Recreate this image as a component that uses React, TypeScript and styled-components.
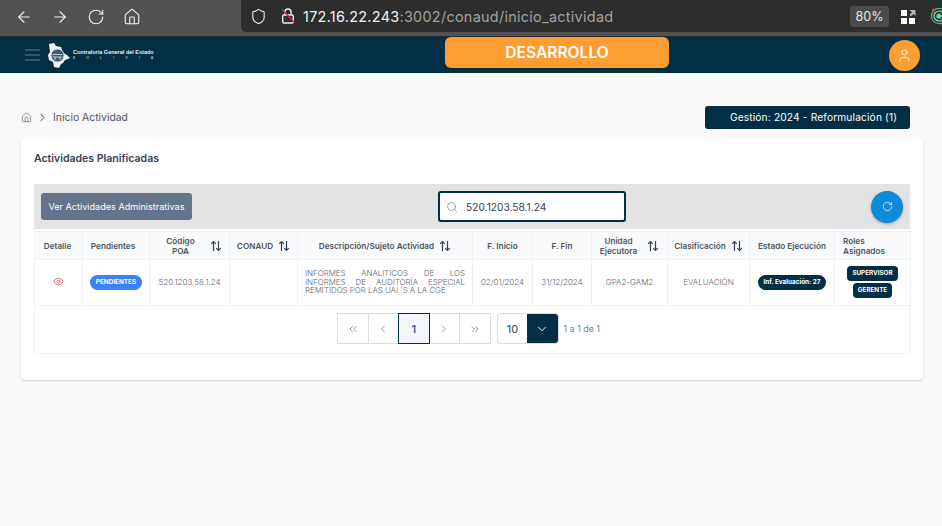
import React from 'react';
import styled, { createGlobalStyle } from 'styled-components';
import {
  ArrowLeft,
  ArrowRight,
  RotateCw,
  Home,
  Shield,
  Search,
  User,
  Eye,
  ChevronLeft,
  ChevronRight,
  ChevronsLeft,
  ChevronsRight,
  ChevronDown,
} from 'lucide-react';

const GlobalStyle = createGlobalStyle`
  html, body {
    margin: 0;
    padding: 0;
    height: 100%;
    overflow: hidden;
    background: #f9f9f9;
    font-family: Inter, "Liberation Sans", sans-serif;
  }
  * { box-sizing: border-box; }
`;

const Page = styled.div`
  width: 942px;
  height: 526px;
  overflow: hidden;
  display: flex;
  flex-direction: column;
`;

/* browser chrome */
const BrowserBar = styled.div`
  height: 37px;
  background: #525252;
  display: flex;
  align-items: flex-start;
  border-bottom: 1px solid #2a2a2a;
`;

const NavButtons = styled.div`
  width: 241px;
  height: 33px;
  display: flex;
  align-items: center;
  gap: 18px;
  padding-left: 15px;
  color: #f2f2f2;
  flex-shrink: 0;
`;

const UrlBar = styled.div`
  flex: 1;
  height: 32px;
  background: #2d2d2d;
  border-radius: 0 0 0 5px;
  display: flex;
  align-items: center;
  padding: 0 0 0 9px;
  color: #f0f0f0;
`;

const LockGap = styled.div`
  width: 13px;
`;

const UrlText = styled.div`
  margin-left: 7px;
  font-size: 14.4px;
  letter-spacing: 0.3px;
  color: #f4f4f4;
  flex: 1;
  white-space: nowrap;
  span { color: #a2a2a2; }
`;

const Zoom = styled.div`
  width: 39px;
  height: 21px;
  border-radius: 3px;
  background: #4a4a4a;
  color: #e6e6e6;
  font-size: 12.5px;
  display: flex;
  align-items: center;
  justify-content: center;
  margin-right: 12px;
`;

const AddonWrap = styled.div`
  width: 41px;
  display: flex;
  align-items: center;
  gap: 14px;
  flex-shrink: 0;
`;

/* app navbar */
const NavBar = styled.div`
  height: 36px;
  background: #022f46;
  display: flex;
  align-items: center;
  padding: 0 22px 0 25px;
`;

const Burger = styled.div`
  width: 15px;
  display: flex;
  flex-direction: column;
  gap: 3px;
  margin-right: 7px;
  i {
    display: block;
    height: 2px;
    background: #33556a;
  }
`;

const Brand = styled.div`
  display: flex;
  align-items: center;
  gap: 2px;
  width: 106px;
`;

const BrandText = styled.div`
  color: #e8eef2;
  font-family: "Liberation Sans", sans-serif;
  display: flex;
  flex-direction: column;
  width: 80px;
  line-height: 1;
  b {
    font-size: 5.5px;
    white-space: nowrap;
  }
  small {
    font-size: 3px;
    margin-top: 2px;
    display: flex;
    justify-content: space-between;
  }
`;

const EnvBadge = styled.div`
  width: 224px;
  height: 31px;
  border-radius: 6px;
  background: #fc9e31;
  color: #fff;
  font-size: 15.6px;
  font-weight: 600;
  display: flex;
  align-items: center;
  justify-content: center;
  margin-left: 292px;
  margin-top: -5px;
`;

const Avatar = styled.div`
  width: 31px;
  height: 31px;
  border-radius: 50%;
  background: #fc9e31;
  color: #fff;
  display: flex;
  align-items: center;
  justify-content: center;
  margin-left: auto;
  margin-top: 1px;
`;

/* content */
const Content = styled.div`
  padding: 33px 32px 0 21px;
  flex: 1;
`;

const TopRow = styled.div`
  display: flex;
  align-items: flex-start;
  justify-content: space-between;
  height: 23px;
`;

const Crumbs = styled.div`
  display: flex;
  align-items: center;
  gap: 4px;
  height: 23px;
  color: #4b5563;
  font-size: 10.4px;
`;

const GestionTag = styled.div`
  width: 205px;
  height: 23px;
  padding: 0 0 2px 12px;
  background: #022f46;
  color: #fff;
  border-radius: 3px;
  font-size: 10.2px;
  font-weight: 400;
  letter-spacing: 0.15px;
  display: flex;
  align-items: center;
  justify-content: center;
`;

const Card = styled.div`
  margin-top: 10px;
  width: 902px;
  height: 241px;
  background: #fff;
  border-radius: 4px;
  box-shadow: 0 1px 2px rgba(0, 0, 0, 0.18);
  padding: 13px 13px 0;
`;

const CardTitle = styled.div`
  font-size: 10.5px;
  font-weight: 600;
  color: #374151;
  height: 13px;
  line-height: 13px;
`;

const Toolbar = styled.div`
  margin-top: 19px;
  height: 45px;
  background: #e3e3e5;
  display: grid;
  grid-template-columns: 397px 188px 1fr;
  align-items: center;
  padding: 0 7px;
`;

const AdminButton = styled.button`
  justify-self: start;
  width: 151px;
  height: 27px;
  border: 0;
  border-radius: 3px;
  background: #64748b;
  color: #fff;
  font-family: inherit;
  font-size: 9.1px;
  font-weight: 400;
  padding: 0;
`;

const SearchBox = styled.div`
  height: 31px;
  background: #fff;
  border: 2px solid #022f46;
  border-radius: 3px;
  display: flex;
  align-items: center;
  gap: 8px;
  padding-left: 6px;
  color: #6b7280;
  font-size: 10.2px;
  span { color: #374151; }
`;

const RefreshButton = styled.button`
  justify-self: end;
  width: 32px;
  height: 32px;
  border: 0;
  border-radius: 50%;
  background: #0c8bd8;
  color: #fff;
  padding: 0;
  display: flex;
  align-items: center;
  justify-content: center;
  box-shadow: 0 1px 3px rgba(0, 0, 0, 0.3);
`;

const Table = styled.table`
  width: 876px;
  table-layout: fixed;
  border-collapse: collapse;
  margin-top: 2px;
  font-size: 8px;
`;

const Th = styled.th`
  height: 28px;
  background: #f9fafb;
  border: 1px solid #f1f2f4;
  color: #4b5563;
  font-size: 8.2px;
  font-weight: 600;
  line-height: 10px;
  padding: 0 4px;
`;

const HeadInner = styled.div<{ $gap?: number; $align?: string; $shiftLeft?: number; $shiftRight?: number }>`
  display: flex;
  align-items: center;
  justify-content: ${(p) => p.$align || 'center'};
  gap: ${(p) => p.$gap ?? 5}px;
  padding-right: ${(p) => p.$shiftLeft ?? 0}px;
  padding-left: ${(p) => p.$shiftRight ?? 0}px;
`;

const HeadLabel = styled.div<{ $left?: boolean }>`
  text-align: ${(p) => (p.$left ? 'left' : 'center')};
`;

const Td = styled.td`
  height: 46px;
  border: 1px solid #f1f2f4;
  color: #5f6672;
  font-size: 8px;
  font-weight: 300;
  text-align: center;
  padding: 0 4px 1px;
`;

const DescCell = styled(Td)`
  text-align: justify;
  line-height: 8.6px;
  padding: 0 7px 1px 7px;
  font-size: 7.9px;
`;

const RoleStack = styled.div`
  display: flex;
  flex-direction: column;
  align-items: center;
  gap: 2px;
`;

const Pill = styled.span<{ $bg: string }>`
  display: inline-block;
  background: ${(p) => p.$bg};
  color: #fff;
  font-size: 6.4px;
  font-weight: 700;
  line-height: 15px;
  height: 15px;
  padding: 0 6px;
  border-radius: 8px;
  white-space: nowrap;
`;

const RoleTag = styled.span`
  background: #022f46;
  color: #fff;
  font-size: 6.3px;
  font-weight: 700;
  line-height: 15px;
  height: 15px;
  padding: 0 5px;
  border-radius: 4px;
`;

const Footer = styled.div`
  width: 876px;
  height: 48px;
  border: 1px solid #f1f2f4;
  border-top: 0;
  display: flex;
  align-items: center;
  justify-content: center;
  padding: 0 10px 2px 4px;
`;

const Pager = styled.div`
  display: flex;
`;

const PageButton = styled.div<{ $active?: boolean }>`
  width: 31.5px;
  height: 31px;
  margin-left: -1px;
  border: 1px solid ${(p) => (p.$active ? '#022f46' : '#dcdee2')};
  background: ${(p) => (p.$active ? '#f3f6fa' : '#fff')};
  color: ${(p) => (p.$active ? '#4a5596' : '#6f7480')};
  font-size: 11px;
  font-weight: 600;
  display: flex;
  align-items: center;
  justify-content: center;
  position: relative;
  z-index: ${(p) => (p.$active ? 1 : 0)};
`;

const SizeSelect = styled.div`
  margin-left: 6px;
  width: 62px;
  height: 31px;
  display: flex;
  border: 1px solid #d8dbe0;
  border-radius: 4px;
  overflow: hidden;
`;

const SizeValue = styled.div`
  width: 29px;
  font-size: 11px;
  color: #374151;
  display: flex;
  align-items: center;
  justify-content: center;
  padding-left: 1px;
`;

const SizeArrow = styled.div`
  flex: 1;
  background: #022f46;
  color: #fff;
  display: flex;
  align-items: center;
  justify-content: center;
`;

const PageInfo = styled.div`
  margin-left: 5px;
  font-size: 8.9px;
  color: #7b818b;
`;

const SortIcon = () => (
  <svg width="12" height="12" viewBox="0 0 12 12" fill="none" stroke="#344154" strokeWidth="1.2" style={{ flexShrink: 0 }}>
    <path d="M3.5 11V1.5M1.2 3.8 3.5 1.5l2.3 2.3" />
    <path d="M8.5 1v9.5M6.2 8.2l2.3 2.3 2.3-2.3" />
  </svg>
);

const InsecureLock = () => (
  <svg width="16" height="18" viewBox="0 0 16 18" fill="none">
    <path d="M5 8V5a3 3 0 0 1 6 0v3" stroke="#eee" strokeWidth="1.4" />
    <rect x="2.7" y="8" width="10.6" height="8" rx="1.2" stroke="#eee" strokeWidth="1.4" />
    <path d="M1.5 2 14.5 15.5" stroke="#e0204c" strokeWidth="1.3" />
  </svg>
);

const GridAddon = () => (
  <svg width="15" height="15" viewBox="0 0 15 15" style={{ flexShrink: 0 }}>
    <rect x="0" y="1" width="6" height="6" fill="#fff" />
    <rect x="0" y="9" width="6" height="6" fill="#fff" />
    <rect x="8" y="9" width="6" height="6" fill="#fff" />
    <path d="M8.5 1H14.5V7L12.6 5 10 7.3 8.4 5.7 11 3.2Z" fill="#b9b9b9" />
  </svg>
);

const RadarAddon = () => (
  <svg width="18" height="18" viewBox="0 0 18 18" fill="none" style={{ flexShrink: 0 }}>
    <circle cx="9" cy="9" r="7.6" stroke="#45b58a" strokeWidth="1.2" />
    <circle cx="9" cy="9" r="5" stroke="#9ad8c0" strokeWidth="1.2" />
    <circle cx="9" cy="9" r="2.6" fill="#52e39b" />
    <circle cx="3.5" cy="3" r="1.5" fill="#d9532c" />
    <circle cx="14.5" cy="4.5" r="1.5" fill="#d9532c" />
  </svg>
);

const BoliviaLogo = () => (
  <svg width="24" height="27" viewBox="0 0 24 27">
    <path d="M2 2 7 1l2 3 5 1 2 6 4 2 3 3-2 1-3 1-2 3-2 1-2 4-5-1-1-5-4-2-1-5 2-3z" fill="#f0f3f5" />
    <circle cx="10.5" cy="13.5" r="6.6" fill="#3d5e72" stroke="#dfe7ec" strokeWidth="1" />
    <path d="M5.5 12.5h10M5.5 15h10" stroke="#dfe7ec" strokeWidth="0.8" />
    <path d="M8 15v3M13 15v3" stroke="#dfe7ec" strokeWidth="0.8" />
  </svg>
);

type Column = {
  label: React.ReactNode;
  width: number;
  sort?: boolean;
  gap?: number;
  left?: boolean;
  shiftLeft?: number;
  shiftRight?: number;
};

const columns: Column[] = [
  { label: 'Detalle', width: 48, shiftLeft: 2 },
  { label: 'Pendientes', width: 67, shiftLeft: 6 },
  { label: <>Código<br />POA</>, width: 80, sort: true, gap: 15, shiftRight: 9 },
  { label: 'CONAUD', width: 68, sort: true },
  { label: 'Descripción/Sujeto Actividad', width: 175, sort: true },
  { label: 'F. Inicio', width: 60 },
  { label: 'F. Fin', width: 59 },
  { label: <>Unidad<br />Ejecutora</>, width: 76, sort: true, gap: 10 },
  { label: 'Clasificación', width: 82, sort: true },
  { label: 'Estado Ejecución', width: 85 },
  { label: <>Roles<br />Asignados</>, width: 76, left: true, shiftRight: 4 },
];

export default function App() {
  return (
    <Page>
      <GlobalStyle />
      <BrowserBar>
        <NavButtons>
          <ArrowLeft size={18} strokeWidth={1.5} />
          <ArrowRight size={18} strokeWidth={1.5} />
          <RotateCw size={18} strokeWidth={1.5} />
          <Home size={18} strokeWidth={1.5} />
        </NavButtons>
        <UrlBar>
          <Shield size={17} strokeWidth={1.5} />
          <LockGap />
          <InsecureLock />
          <UrlText>
            172.16.22.243<span>:3002/conaud/inicio_actividad</span>
          </UrlText>
          <Zoom>80%</Zoom>
          <AddonWrap>
            <GridAddon />
            <RadarAddon />
          </AddonWrap>
        </UrlBar>
      </BrowserBar>

      <NavBar>
        <Burger>
          <i />
          <i />
          <i />
        </Burger>
        <Brand>
          <BoliviaLogo />
          <BrandText>
            <b>Contraloría General del Estado</b>
            <small>
              <span>B</span><span>O</span><span>L</span><span>I</span><span>V</span><span>I</span><span>A</span>
            </small>
          </BrandText>
        </Brand>
        <EnvBadge>DESARROLLO</EnvBadge>
        <Avatar>
          <User size={15} strokeWidth={1.4} />
        </Avatar>
      </NavBar>

      <Content>
        <TopRow>
          <Crumbs>
            <Home size={11} strokeWidth={1.3} />
            <ChevronRight size={13} strokeWidth={1.8} color="#374151" />
            <span>Inicio Actividad</span>
          </Crumbs>
          <GestionTag>Gestión: 2024 - Reformulación (1)</GestionTag>
        </TopRow>

        <Card>
          <CardTitle>Actividades Planificadas</CardTitle>
          <Toolbar>
            <AdminButton>Ver Actividades Administrativas</AdminButton>
            <SearchBox>
              <Search size={12} strokeWidth={1.3} />
              <span>520.1203.58.1.24</span>
            </SearchBox>
            <RefreshButton>
              <RotateCw size={11} strokeWidth={1.5} />
            </RefreshButton>
          </Toolbar>

          <Table>
            <colgroup>
              {columns.map((c, i) => (
                <col key={i} style={{ width: c.width }} />
              ))}
            </colgroup>
            <thead>
              <tr>
                {columns.map((c, i) => (
                  <Th key={i}>
                    <HeadInner
                      $gap={c.gap}
                      $align={c.left ? 'flex-start' : undefined}
                      $shiftLeft={c.shiftLeft}
                      $shiftRight={c.shiftRight}
                    >
                      <HeadLabel $left={c.left}>{c.label}</HeadLabel>
                      {c.sort && <SortIcon />}
                    </HeadInner>
                  </Th>
                ))}
              </tr>
            </thead>
            <tbody>
              <tr>
                <Td>
                  <Eye size={11} color="#e0393e" strokeWidth={1.5} />
                </Td>
                <Td>
                  <Pill $bg="#3b82f6">PENDIENTES</Pill>
                </Td>
                <Td>520.1203.58.1.24</Td>
                <Td />
                <DescCell>INFORMES ANALITICOS DE LOS INFORMES DE AUDITORÍA ESPECIAL REMITIDOS POR LAS UAI ´S A LA CGE</DescCell>
                <Td>02/01/2024</Td>
                <Td>31/12/2024</Td>
                <Td>GPA2-GAM2</Td>
                <Td>EVALUACIÓN</Td>
                <Td>
                  <Pill $bg="#022f46">Inf. Evaluación: 27</Pill>
                </Td>
                <Td>
                  <RoleStack>
                    <RoleTag>SUPERVISOR</RoleTag>
                    <RoleTag>GERENTE</RoleTag>
                  </RoleStack>
                </Td>
              </tr>
            </tbody>
          </Table>

          <Footer>
            <Pager>
              <PageButton><ChevronsLeft size={12} strokeWidth={1.4} /></PageButton>
              <PageButton><ChevronLeft size={12} strokeWidth={1.4} /></PageButton>
              <PageButton $active>1</PageButton>
              <PageButton><ChevronRight size={12} strokeWidth={1.4} /></PageButton>
              <PageButton><ChevronsRight size={12} strokeWidth={1.4} /></PageButton>
            </Pager>
            <SizeSelect>
              <SizeValue>10</SizeValue>
              <SizeArrow><ChevronDown size={14} strokeWidth={1.6} /></SizeArrow>
            </SizeSelect>
            <PageInfo>1 a 1 de 1</PageInfo>
          </Footer>
        </Card>
      </Content>
    </Page>
  );
}
